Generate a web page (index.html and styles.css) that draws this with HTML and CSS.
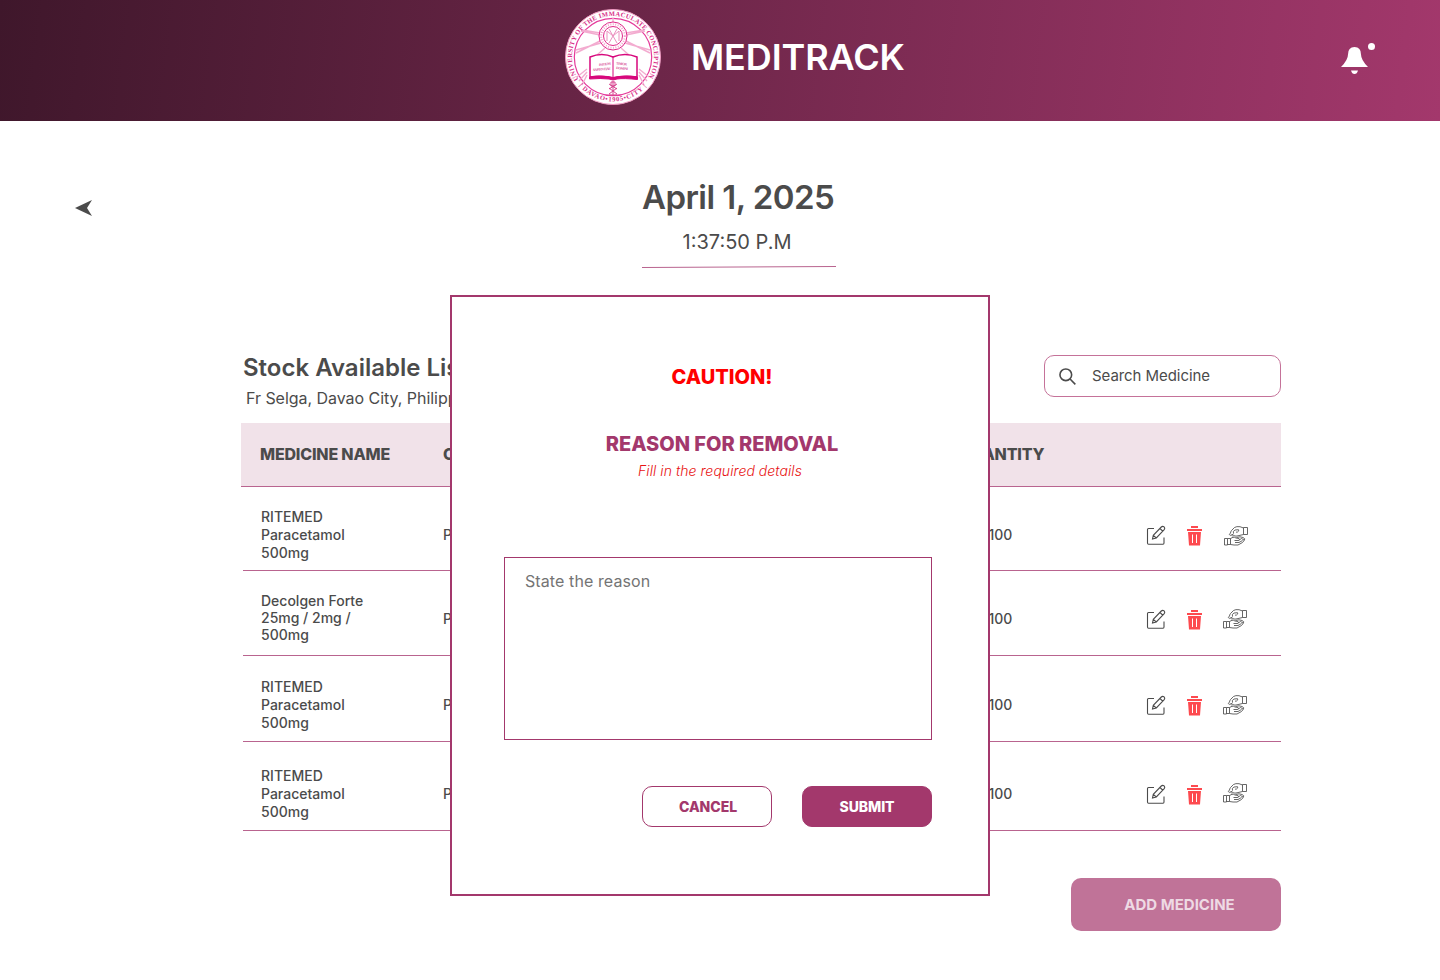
FILE: index.html
```html
<!DOCTYPE html>
<html lang="en">
<head>
<meta charset="utf-8">
<title>Meditrack</title>
<link rel="stylesheet" href="styles.css">
</head>
<body>
<svg class="defs" width="0" height="0">
  <symbol id="edit" viewBox="0 0 20 20"><g fill="none" stroke="#4b4b4b" stroke-width="1.100"><path d="M8 3.500H2.500Q1.500 3.500 1.500 4.500V18Q1.500 19.200 2.500 19.200H17Q18 19.200 18 18V12.500"/><path d="M6.500 14L7.300 10.300L15.300 2Q16.500 .8 18 1.800Q19.300 3.200 18.200 4.700L10.300 13ZM14 3.500L16.700 6.200M7.300 10.300L10.300 13"/></g></symbol>
  <symbol id="trash" viewBox="0 0 16 20"><path fill="#fd4a4f" fill-rule="evenodd" d="M5 0H12V2H5ZM1 3H16V5H1ZM2 6H15L14 19.500H3ZM6 8.500V17H7V8.500ZM10 8.500V17H11V8.500Z"/></symbol>
  <symbol id="hands" viewBox="0 0 24 20"><g fill="none" stroke="#4b4b4b" stroke-width=".85"><path d="M19.500 1.500H23.500V8.500H19.500ZM19.500 2L16 .7Q12.500 .2 10.500 1.500L7.500 4.500Q6.500 6 6.500 7L5.300 8.500Q6 10 7.500 9L9.500 8M9.500 7.500Q8.500 5 11 4L14.500 3.700Q15.500 5 13.500 6L12 6.200M7.500 9Q8.500 10.500 10 9.700Q12 10.500 14 9.800L19.500 8.500"/><path d="M.5 12.500H3.500V19H.5ZM3.500 12.500H6.500V18.500H3.500M6.500 12.500L9 11.300Q10.500 11 12 12L15 12.500Q16 13.500 14.500 14.500L10.500 14.500M12.500 11.500L16 10.800L19 11.500Q21.500 12.500 20.500 14L18.500 16.500L14 19H10L6.500 18.500M14.500 14.500L17.500 12.500L20 14M11 16.500H15L18.500 14.500"/></g></symbol>
</svg>
<header class="topbar">
  <div class="brand">
    <svg class="seal" viewBox="0 0 96 96">
      <defs><path id="arc" d="M13.600 70.300A41 41 0 1 1 82.400 70.300"/><path id="arcBottom" d="M14 76.600A44.500 44.500 0 0 0 82 76.600"/></defs>
      <circle cx="48" cy="48" r="47.500" fill="#fff" stroke="#f097c0"/>
      <circle cx="48" cy="48" r="38.700" fill="none" stroke="#e5399a" stroke-width="1.200"/>
      <g stroke="#f3acd0" stroke-width="1.400" fill="none"><path d="M35 24L17 21M35 26L16 22M61 24L79 21M61 26L80 22M36 34L11 41M35 32L11 44M60 34L85 41M61 32L85 44M40 39L32 46M56 39L64 46M22 60L12 68M22 63L14 72M22 66L17 76M74 60L84 68M74 63L82 72M74 66L79 76M48 9V14"/></g>
      <g fill="none" stroke="#e0288b"><circle cx="48" cy="27" r="14" fill="#fff"/><circle cx="48" cy="27" r="9.500"/><circle cx="48" cy="27" r="11.800" stroke-width="2" stroke-dasharray="1 1.500" stroke="#f3a3cb"/><path d="M42 32V22L48 27L54 22V32M44 20L52 34M52 20L44 34" stroke="#eb90bf"/></g>
      <path d="M25 68V48Q37 43 48 48Q60 43 72 48V68Q59 66 48 69Q36 66 25 68Z" fill="#fff" stroke="#d7077c" stroke-width="1.500"/>
      <path d="M24.500 70V68Q38 66 48 68.500Q59 66 72.500 68V70.500Q59 69 52 70L48 71L44 70Q36 69 24.500 70ZM48 48V70" fill="#d7077c" stroke="#d7077c"/>
      <g class="book-text"><text x="34" y="57" textLength="12" transform="rotate(-6 34 57)">INITIUM</text><text x="28" y="62" textLength="18" transform="rotate(-4 28 62)">SAPIENTIAE</text><text x="51" y="55.500" textLength="11" transform="rotate(5 51 55)">TIMOR</text><text x="51" y="60" textLength="12" transform="rotate(5 51 60)">DOMINI</text></g>
      <path d="M48 72V87M44 75L52 80M52 75L44 80M44 85L52 79M52 85L44 79M46 73H50V77H46ZM44 86H52" fill="none" stroke="#d8438f"/>
      <text class="seal-text"><textPath href="#arc" textLength="173">UNIVERSITY OF THE IMMACULATE CONCEPTION</textPath></text>
      <text class="seal-text"><textPath href="#arcBottom" textLength="76">| DAVAO•1905•CITY |</textPath></text>
    </svg>
    <h1>MEDITRACK</h1>
  </div>
  <svg class="bell" viewBox="0 0 36 34"><path fill="#fff" d="M1 25Q8 18 8 12.500Q8 5 14.500 5Q21 5 21 12.500Q21 18 28 25ZM11 28.500H18Q17 32 14.500 32Q12 32 11 28.500Z"/><circle cx="31.500" cy="4.500" r="3.500" fill="#fff"/></svg>
</header>
<main class="page">
  <div class="intro">
    <svg class="back" viewBox="0 0 18 16"><path fill="#4b4b4b" d="M0 8L17 0L12 8L17 16Z"/></svg>
    <div class="clock">
      <h2>April 1, 2025</h2>
      <p>1:37:50 P.M</p>
      <svg class="rule" viewBox="0 0 194 3"><path d="M0 2.500L194 1.500" stroke="#b9648f"/></svg>
    </div>
  </div>
  <section class="stock">
    <div class="stock-head">
      <div><h3>Stock Available List</h3><p>Fr Selga, Davao City, Philippines</p></div>
      <div class="search"><svg viewBox="0 0 18 18"><g fill="none" stroke="#4b4b4b" stroke-width="1.700"><circle cx="7.200" cy="7.200" r="6.200"/><path d="M11.700 11.700L17.300 17.300"/></g></svg><span>Search Medicine</span></div>
    </div>
    <div class="row heading"><span>MEDICINE NAME</span><span>CATEGORY</span><span class="quantity">QUANTITY</span></div>
    <div class="row first"><span>RITEMED<br>Paracetamol<br>500mg</span><span>Pain Reliever</span><span>100</span><div class="actions"><svg class="edit"><use href="#edit"/></svg><svg class="trash"><use href="#trash"/></svg><svg class="hands"><use href="#hands"/></svg></div></div>
    <div class="row second"><span>Decolgen Forte<br>25mg / 2mg /<br>500mg</span><span>Pain Reliever</span><span>100</span><div class="actions"><svg class="edit"><use href="#edit"/></svg><svg class="trash"><use href="#trash"/></svg><svg class="hands"><use href="#hands"/></svg></div></div>
    <div class="row third"><span>RITEMED<br>Paracetamol<br>500mg</span><span>Pain Reliever</span><span>100</span><div class="actions"><svg class="edit"><use href="#edit"/></svg><svg class="trash"><use href="#trash"/></svg><svg class="hands"><use href="#hands"/></svg></div></div>
    <div class="row fourth"><span>RITEMED<br>Paracetamol<br>500mg</span><span>Pain Reliever</span><span>100</span><div class="actions"><svg class="edit"><use href="#edit"/></svg><svg class="trash"><use href="#trash"/></svg><svg class="hands"><use href="#hands"/></svg></div></div>
    <button class="add">ADD MEDICINE</button>
  </section>
</main>
<section class="modal" role="dialog">
  <h2 class="caution">CAUTION!</h2>
  <h2 class="reason">REASON FOR REMOVAL</h2>
  <p>Fill in the required details</p>
  <div class="field">State the reason</div>
  <div class="buttons"><button class="cancel">CANCEL</button><button class="submit">SUBMIT</button></div>
</section>
</body>
</html>
```
FILE: styles.css
```css
* { box-sizing: border-box; }
body { margin: 0; width: 1440px; height: 980px; overflow: hidden; position: relative; background: #fff; color: #4b4b4b; font-family: Inter, sans-serif; }
h1, h2, h3, p { margin: 0; white-space: nowrap; }
button { font-family: inherit; padding: 0; }
svg { display: block; flex: none; }
.defs { position: absolute; }
.topbar { height: 121px; display: flex; justify-content: space-between; padding-left: 565px; padding-right: 64px; background: linear-gradient(97deg, #3f172b 0%, #a3386c 100%); }
.brand { display: flex; gap: 30px; padding-top: 9px; }
.seal { width: 96px; height: 96px; }
.seal-text { font: 600 6.600px "Liberation Serif", serif; fill: #d83088; }
.book-text { font: 700 3.600px "Liberation Serif", serif; fill: #d9569b; }
h1 { color: #fff; font-size: 36px; line-height: 44px; font-weight: 600; letter-spacing: -.12px; margin-top: 26px; }
.bell { width: 36px; height: 34px; margin-top: 42px; }
.intro { height: 234px; display: flex; padding-left: 75px; }
.back { width: 18px; height: 16px; margin-top: 79px; }
.clock { width: 194px; margin-left: 549px; padding-top: 56px; text-align: center; }
.clock h2 { font-size: 33px; line-height: 40px; font-weight: 600; letter-spacing: -.55px; padding-right: 2px; }
.clock p { font-size: 20px; line-height: 24px; margin-top: 13px; padding-right: 4px; }
.rule { width: 194px; height: 3px; margin-top: 11px; }
.stock { width: 1040px; margin-left: 241px; display: flex; flex-direction: column; }
.stock-head { height: 68px; display: flex; justify-content: space-between; padding-left: 2px; }
h3 { font-size: 24px; line-height: 26px; font-weight: 600; }
.stock-head p { font-size: 16px; line-height: 20px; margin: 7px 0 0 3px; letter-spacing: -.04px; }
.search { width: 237px; height: 42px; border: 1px solid #c57299; border-radius: 10px; display: flex; align-items: center; padding: 0 0 1px 14px; font-size: 15px; letter-spacing: -.06px; gap: 16px; }
.search svg { width: 17px; height: 17px; margin-top: 1px; }
.row { display: grid; grid-template-columns: 182px 545px 158px 1fr; align-items: start; border-bottom: 1px solid #b9648f; margin-left: 2px; padding-left: 18px; font-size: 14px; line-height: 18px; font-weight: 500; }
.row > span + span { padding-top: 18px; }
.row > span:nth-child(3) { padding-left: .5px; }
.row.heading { height: 64px; margin-left: 0; padding: 0 0 2px 19px; grid-template-columns: 183px 516px 1fr; align-items: center; background: #f1e2e9; font-size: 16px; font-weight: 800; letter-spacing: -.18px; }
.row.heading > span { padding: 0; }
.first { height: 84px; padding-top: 21px; }
.second { height: 85px; padding-top: 21px; line-height: 17px; }
.third { height: 86px; padding-top: 22px; }
.fourth { height: 89px; padding-top: 25px; }
.actions { display: flex; align-items: flex-start; padding-top: 18px; }
.edit { width: 20px; height: 20px; margin: -1px 20px 0 0; }
.trash { width: 16px; height: 20px; margin-right: 22px; }
.hands { width: 24px; height: 20px; }
.second .hands, .third .hands { margin: -1px 0 0 -1px; }
.fourth .hands { margin: -2px 0 0 -1px; }
.add { align-self: flex-end; width: 210px; height: 53px; margin-top: 47px; border: 0; border-radius: 10px; background: #c07398; color: #eedae4; font-size: 15px; font-weight: 700; padding-left: 7px; }
.modal { position: absolute; left: 450px; top: 295px; width: 540px; height: 601px; border: 2px solid #a3386c; background: #fff; text-align: center; padding: 68px 56px 0 52px; }
.modal h2 { font-size: 20px; line-height: 24px; font-weight: 800; letter-spacing: -.02px; padding-left: 8px; }
.caution { color: #f00; }
.reason { color: #a3386c; margin-top: 43px; }
.modal p { color: #e81313; font-size: 14px; line-height: 18px; font-style: italic; font-weight: 300; letter-spacing: .06px; margin-top: 6px; padding-left: 4px; }
.field { width: 428px; height: 183px; margin-top: 77px; border: 1px solid #a3386c; padding: 12px 20px; text-align: left; font-size: 16px; line-height: 22px; letter-spacing: .1px; color: #747474; }
.buttons { display: flex; justify-content: flex-end; gap: 30px; margin-top: 46px; width: 428px; }
.buttons button { width: 130px; height: 41px; border: 1px solid #a3386c; border-radius: 10px; font-size: 14px; font-weight: 800; letter-spacing: -.05px; }
.buttons .cancel { background: #fff; color: #a3386c; padding-left: 2px; }
.buttons .submit { background: #a3386c; color: #fff; }
```
